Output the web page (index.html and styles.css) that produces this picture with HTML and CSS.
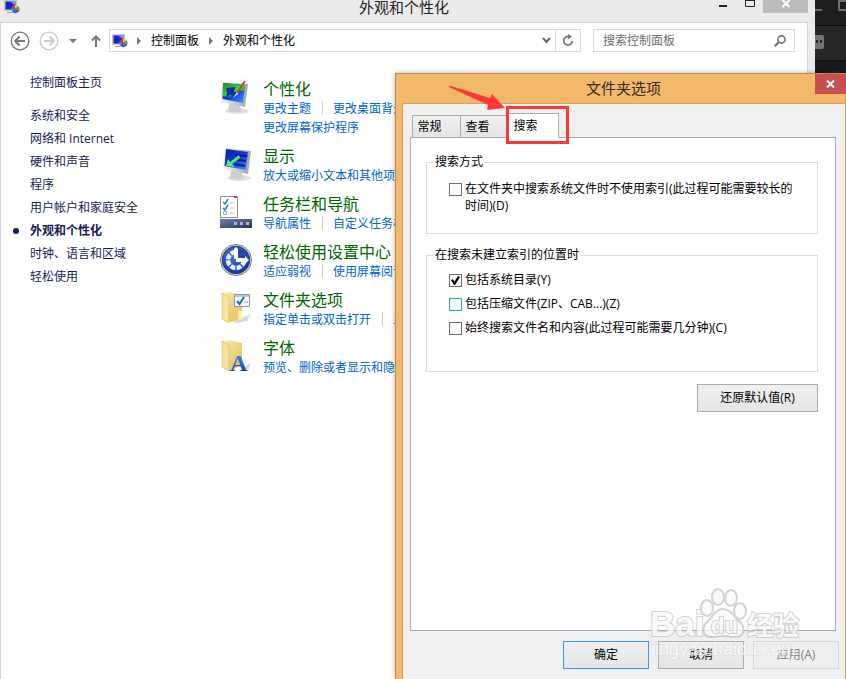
FILE: index.html
```html
<!DOCTYPE html>
<html lang="zh-CN">
<head>
<meta charset="utf-8">
<title>外观和个性化</title>
<link rel="stylesheet" href="styles.css">
</head>
<body>
<svg width="0" height="0" class="defs" aria-hidden="true">
  <defs>
    <linearGradient id="screen" x1="0" y1="0" x2="1" y2="1"><stop offset="0" stop-color="#0a1fa0"/><stop offset=".5" stop-color="#1238e0"/><stop offset="1" stop-color="#3f9bf5"/></linearGradient>
    <linearGradient id="green" x1="0" y1="0" x2="1" y2="1"><stop offset="0" stop-color="#1c8f1c"/><stop offset=".55" stop-color="#35d535"/><stop offset="1" stop-color="#1f9a2a"/></linearGradient>
    <linearGradient id="frame" x1="0" y1="0" x2="1" y2="0"><stop offset="0" stop-color="#f2f2f2"/><stop offset="1" stop-color="#a4a4a4"/></linearGradient>
    <linearGradient id="folder" x1="0" y1="0" x2="1" y2="1"><stop offset="0" stop-color="#fbefb4"/><stop offset="1" stop-color="#dfb850"/></linearGradient>
    <linearGradient id="bar" x1="0" y1="0" x2="1" y2="1"><stop offset="0" stop-color="#6b84ad"/><stop offset="1" stop-color="#27344f"/></linearGradient>
    <radialGradient id="ease" cx=".4" cy=".3" r=".8"><stop offset="0" stop-color="#4a74dc"/><stop offset="1" stop-color="#142c8c"/></radialGradient>
    <linearGradient id="letter" x1="0" y1="0" x2="0" y2="1"><stop offset="0" stop-color="#4b9bf0"/><stop offset="1" stop-color="#0b2fae"/></linearGradient>
    <symbol id="cp" viewBox="0 0 16 16">
      <path d="M0 1h13v11H0z" fill="#c9c8bd"/><path d="M1.500 2.500h10v8h-10z" fill="#1128d0"/><path d="M6 2.500h5.500v4z" fill="#7f9cf5"/>
      <path d="M3 13h6v1H3z" fill="#a5a5a5"/>
      <path d="M11 10V6a4 4 0 0 0-3.800 3z" fill="#e52a24"/><path d="M11 10V6a4 4 0 0 1 3 1z" fill="#f5c518"/><path d="M11 10l3-3a4 4 0 0 1 1.500 4z" fill="#35b535"/><path d="M11 10l4.500 1a4 4 0 0 1-3 3z" fill="#9431c8"/><path d="M11 10l1.500 4a4 4 0 0 1-4.500-2z" fill="#2456e5"/><path d="M11 10l-3 2a4 4 0 0 1-.8-3z" fill="#18a7d8"/>
    </symbol>
  </defs>
</svg>

<div class="desktop">
  <div class="backdrop" aria-hidden="true">
    <svg width="31" height="73" viewBox="0 0 31 73">
      <rect width="31" height="73" fill="#191919"/><rect width="31" height="25" fill="#1e1e1e"/><rect y="26" width="31" height="34" fill="#262626"/>
      <path d="M0 25.500h31M0 61h31" stroke="#0d0d0d"/>
      <path d="M0 9h7v2H0z" fill="#6f6f6f"/><path d="M24 0v10h7M24 1h7" fill="none" stroke="#6f6f6f" stroke-width="2"/>
      <rect x="-6" y="35" width="15" height="14" rx="2" fill="#747474"/><path d="M1 40h2v3H1zM5 40h2v3H5z" fill="#222"/>
      <path d="M12 72h16" stroke="#333"/>
    </svg>
  </div>

  <section class="explorer">
    <header class="titlebar">
      <svg class="app-icon" width="16" height="15" viewBox="0 1 16 15"><use href="#cp" width="16" height="16"/></svg>
      <h1>外观和个性化</h1>
      <div class="captions">
        <button aria-label="最小化"><svg width="30" height="13"><path d="M16 5h8v2h-8z" fill="#222"/></svg></button>
        <button aria-label="最大化"><svg width="30" height="13"><path d="M12.500-1.500h9v8h-9z" fill="none" stroke="#222"/><path d="M12 0h10v1H12z" fill="#222"/></svg></button>
        <button class="close" aria-label="关闭"><svg width="45" height="13"><path d="M19.500 0l7 7M26.500 0l-7 7" stroke="#fff" stroke-width="2"/></svg></button>
      </div>
    </header>
    <div class="client">
      <nav class="toolbar">
        <button aria-label="后退"><svg width="20" height="20" viewBox="0 0 20 20" fill="none" stroke="#777"><circle cx="10" cy="10" r="8.800" stroke-width="1.300"/><path d="M5.500 10H15M9.500 5.500L5.200 10l4.300 4.500" stroke-width="2"/></svg></button>
        <button aria-label="前进"><svg width="20" height="20" viewBox="0 0 20 20" fill="none" stroke="#ccc"><circle cx="10" cy="10" r="8.800" stroke-width="1.300"/><path d="M14.500 10H5M10.500 5.500l4.300 4.500-4.300 4.500" stroke-width="2"/></svg></button>
        <button aria-label="最近位置"><svg width="8" height="8"><path d="M0 2h8L4 6z" fill="#777"/></svg></button>
        <button aria-label="上移"><svg width="10" height="12" viewBox="0 0 10 12" fill="none" stroke="#777" stroke-width="2"><path d="M5 12V2M1 5.500l4-4 4 4"/></svg></button>
        <div class="address">
          <svg width="16" height="16"><use href="#cp"/></svg>
          <svg class="sep" width="5" height="8"><path d="M0 0l4 4-4 4z" fill="#777"/></svg>
          <a href="#">控制面板</a>
          <svg class="sep" width="5" height="8"><path d="M0 0l4 4-4 4z" fill="#777"/></svg>
          <a href="#">外观和个性化</a>
          <button class="drop" aria-label="历史记录"><svg width="9" height="7"><path d="M1 1l3.500 4L8 1" fill="none" stroke="#666" stroke-width="2"/></svg></button>
          <button class="refresh" aria-label="刷新"><svg width="12" height="13" viewBox="0 0 12 13"><path d="M6.500 2.500a4.300 4.300 0 1 0 3.800 4.300" fill="none" stroke="#777" stroke-width="1.700"/><path d="M6 0v5.500l4-3z" fill="#777"/></svg></button>
        </div>
        <label class="search">
          <input type="text" placeholder="搜索控制面板" aria-label="搜索控制面板">
          <svg width="12" height="12" fill="none" stroke="#777"><circle cx="7.500" cy="4.500" r="3.600" stroke-width="1.600"/><path d="M5 7l-4.300 4.300" stroke-width="2"/></svg>
        </label>
      </nav>
      <div class="body">
        <ul class="sidebar">
          <li class="home"><a href="#">控制面板主页</a></li>
          <li><a href="#">系统和安全</a></li>
          <li><a href="#">网络和 Internet</a></li>
          <li><a href="#">硬件和声音</a></li>
          <li><a href="#">程序</a></li>
          <li><a href="#">用户帐户和家庭安全</a></li>
          <li class="current"><a href="#">外观和个性化</a></li>
          <li><a href="#">时钟、语言和区域</a></li>
          <li><a href="#">轻松使用</a></li>
        </ul>
        <main class="categories">
          <article>
            <svg width="32" height="34" viewBox="0 0 32 34"><ellipse cx="17" cy="31" rx="12" ry="3" fill="#e2e2e2"/><path d="M9 24h10l3 7q-7 3-14 0z" fill="#cfcfcf"/><path d="M2 2l26 2-3 23L1 22z" fill="url(#frame)"/><path d="M3 3l22 2-2 18L2.500 19z" fill="url(#screen)"/><path d="M3 3l22 2-1 6q-7-2-10 4-5 3-11 1z" fill="url(#green)"/><path d="M6 8l9-1-1 5h4l-3 5-5-2-4 3 1-5z" fill="#102f9f"/><path d="M25 1L17 13" stroke="#e43a2d" stroke-width="2"/><path d="M17 12l-4 6 5-4z" fill="#ddd"/></svg>
            <div><h2><a href="#">个性化</a></h2><p><a href="#">更改主题</a><a href="#">更改桌面背景</a></p><p><a href="#">更改屏幕保护程序</a></p></div>
          </article>
          <article>
            <svg width="32" height="34" viewBox="0 0 32 34"><ellipse cx="19" cy="31" rx="12" ry="3" fill="#e2e2e2"/><path d="M11 24h10l3 7q-7 3-14 0z" fill="#cfcfcf"/><path d="M5 1l26 3-3 23L3 22z" fill="url(#frame)"/><path d="M6 2l22 3-2 18L4.500 19z" fill="url(#screen)"/><path d="M15 8l12 1M13 12l13 2M14 17l11 2" stroke="#07178b" stroke-width="2"/><path d="M19 8l-9 7-2-3-2 7 9 1-3-3 8-6z" fill="#4cf06b"/></svg>
            <div><h2><a href="#">显示</a></h2><p><a href="#">放大或缩小文本和其他项目</a></p></div>
          </article>
          <article>
            <svg width="32" height="34" viewBox="0 0 32 34"><path d="M.5 1.500h17v21H.5z" fill="#fff" stroke="#8c8c8c"/><path d="M14 1h3v2h-3z" fill="#d44"/><path d="M3 7l2 2 3-5M3 13l2 2 3-5" fill="none" stroke="#2288cc" stroke-width="1.500"/><path d="M3.500 16.500h3v3h-3z" fill="none" stroke="#aaa"/><path d="M10 8h4M10 13h4M10 18h4" stroke="#bbb"/><path d="M0 24h32v9H0z" fill="url(#bar)"/><path d="M14 27h3v3h-3zM20 27h3v3h-3zM26 27h3v3h-3z" fill="#a9b6cf"/></svg>
            <div><h2><a href="#">任务栏和导航</a></h2><p><a href="#">导航属性</a><a href="#">自定义任务栏</a></p></div>
          </article>
          <article>
            <svg width="32" height="34" viewBox="0 0 32 34"><circle cx="16" cy="17" r="15.500" fill="#eee" stroke="#777"/><circle cx="16" cy="17" r="13.800" fill="url(#ease)" stroke="#203a8c"/><circle cx="16" cy="17" r="8" fill="none" stroke="#e7edfb" stroke-width="4.500" stroke-dasharray="5 1.300" stroke-dashoffset="12"/><path d="M17 5l10 3-1 8-9 0z" fill="#2445aa"/><path d="M14 6l2-2 2 2v10h-4zM16 15h9v-2l4 4-4 4v-2h-9z" fill="#fff"/></svg>
            <div><h2><a href="#">轻松使用设置中心</a></h2><p><a href="#">适应弱视</a><a href="#">使用屏幕阅读</a></p></div>
          </article>
          <article>
            <svg width="32" height="34" viewBox="0 0 32 34"><path d="M13 31l18-8-4 7-10 2z" fill="#d8d8d8"/><path d="M2 2l8-1 12 3v22l-11 5-7-2z" fill="url(#folder)"/><path d="M2 2l7 4v26l-7-4z" fill="#f7e39b" stroke="#d9b75c" stroke-width=".6"/><path d="M13 20l9-2v9l-9 4z" fill="#edcd6e"/><path d="M18 20h4v8l-4 1z" fill="#fff1ab"/><path d="M14.500 3.500h15v12h-15z" fill="#f7fbff" stroke="#8b98a8"/><path d="M15 4h14v2H15z" fill="#b9c6d6"/><path d="M17 10l2.500 3L24 6" fill="none" stroke="#1673c4" stroke-width="2"/><path d="M24 11h4" stroke="#99a"/></svg>
            <div><h2><a href="#">文件夹选项</a></h2><p><a href="#">指定单击或双击打开</a><a href="#">显示</a></p></div>
          </article>
          <article>
            <svg width="32" height="34" viewBox="0 0 32 34"><path d="M22 31l9-8-3 9z" fill="#d8d8d8"/><path d="M2 2l8-1 12 3v22l-12 6-7-3z" fill="url(#folder)"/><path d="M2 2l7 4v26l-7-4z" fill="#f7e39b" stroke="#d9b75c" stroke-width=".6"/><text x="10" y="32" class="font-letter" fill="url(#letter)">A</text></svg>
            <div><h2><a href="#">字体</a></h2><p><a href="#">预览、删除或者显示和隐藏</a></p></div>
          </article>
        </main>
      </div>
    </div>
  </section>

  <section class="dialog" role="dialog" aria-labelledby="dialog-title">
    <header>
      <h2 id="dialog-title">文件夹选项</h2>
      <button class="dialog-close" aria-label="关闭"><svg width="9" height="8"><path d="M1 .5l7 7M8 .5l-7 7" stroke="#fff" stroke-width="2"/></svg></button>
    </header>
    <form class="sheet">
      <div class="tabs" role="tablist">
        <button type="button" role="tab">常规</button>
        <button type="button" role="tab">查看</button>
        <button type="button" role="tab" aria-selected="true">搜索</button>
        <span class="highlight"></span>
        <svg class="arrow" width="60" height="28" viewBox="0 0 60 28"><path d="M1 1h2l39 12 2-4 13 14-18 2 1-5L1 2z" fill="#fc3838"/></svg>
      </div>
      <div class="panel" role="tabpanel">
        <fieldset class="how">
          <legend>搜索方式</legend>
          <label><input type="checkbox"><span>在文件夹中搜索系统文件时不使用索引(此过程可能需要较长的时间)(D)</span></label>
        </fieldset>
        <fieldset class="where">
          <legend>在搜索未建立索引的位置时</legend>
          <label><input type="checkbox" checked><span>包括系统目录(Y)</span></label>
          <label><input type="checkbox" class="hot"><span>包括压缩文件(ZIP、CAB...)(Z)</span></label>
          <label><input type="checkbox"><span>始终搜索文件名和内容(此过程可能需要几分钟)(C)</span></label>
        </fieldset>
        <button type="button" class="push restore">还原默认值(R)</button>
      </div>
      <footer>
        <button type="button" class="push default">确定</button>
        <button type="button" class="push">取消</button>
        <button type="button" class="push" disabled>应用(A)</button>
      </footer>
    </form>
    <svg class="watermark" width="152" height="76" viewBox="0 0 152 76" aria-hidden="true">
      <g fill="#fafafa" stroke="#c4c4c4" stroke-width="2">
        <text x="1" y="50" class="wm-brand">Bai</text>
        <ellipse cx="58" cy="22" rx="6" ry="8"/><ellipse cx="69" cy="11" rx="6" ry="8"/><ellipse cx="82" cy="12" rx="6" ry="8"/><ellipse cx="91" cy="25" rx="6" ry="8"/>
        <path d="M74 23c-8 0-10 8-15 12-7 6-6 16 3 16 5 0 8-1 12-1s7 1 12 1c10 0 11-10 4-16-5-4-8-12-16-12z"/>
        <text x="62" y="47" class="wm-du">du</text>
        <text x="98" y="49" class="wm-cn">经验</text>
      </g>
      <text x="2" y="69" class="wm-url">jingyan.baidu.com</text>
    </svg>
  </section>
</div>
</body>
</html>
```
FILE: styles.css
```css
* { box-sizing: border-box; }

body {
  margin: 0;
  font: 12px/16px "Open Sans", "Noto Sans CJK SC", sans-serif;
  color: #000;
}

button {
  padding: 0;
  border: 0;
  background: none;
  font: inherit;
  color: inherit;
}

a { color: inherit; text-decoration: none; }
h1, h2, p, ul { margin: 0; padding: 0; font-weight: normal; }
svg { display: block; flex: none; }
.defs { position: absolute; }

.desktop {
  position: relative;
  min-height: 100vh;
  overflow: hidden;
  background: #191919;
}

.backdrop { position: absolute; top: 0; right: 0; }

/* Explorer window */
.explorer {
  display: flex;
  flex-direction: column;
  min-height: 100vh;
  margin-right: 31px;
  padding-right: 7px;
  background: #ebebeb;
}

.titlebar {
  display: grid;
  grid-template-columns: 1fr auto 1fr;
  height: 22px;
  margin-right: -7px;
  padding-right: 7px;
}

.app-icon { margin-left: 4px; }
.titlebar h1 { font-size: 15px; line-height: 15px; color: #222; }
.captions { display: flex; justify-content: flex-end; align-items: flex-start; }
.captions .close { background: #bcbcbc; }

.client {
  flex: 1;
  border: 1px solid #d5d5d5;
  border-bottom: 0;
  background: #fff;
}

.toolbar {
  display: flex;
  align-items: center;
  padding: 6px 12px 0 9px;
}

.toolbar > button:nth-child(2) { margin-left: 9px; }
.toolbar > button:nth-child(3) { margin-left: 10px; }
.toolbar > button:nth-child(4) { margin-left: 14px; }

.address, .search {
  display: flex;
  align-items: center;
  height: 23px;
  border: 1px solid #d9d9d9;
}

.address { flex: 1; margin: 0 12px 0 8px; padding-left: 2px; }
.address .sep { margin: 0 9px; }
.address a + .sep { margin-left: 10px; }
.address .drop { margin-left: auto; padding: 0 4px; }
.address .refresh { height: 100%; padding: 0 6px; border-left: 1px solid #d9d9d9; }

.search { width: 202px; padding: 0 8px 0 9px; }
.search input {
  flex: 1;
  min-width: 0;
  padding: 0;
  border: 0;
  outline: 0;
  background: none;
  font: inherit;
}
.search input::placeholder { color: #6d6d6d; opacity: 1; }

.body { display: flex; padding-top: 19px; white-space: nowrap; }

.sidebar {
  width: 219px;
  padding-left: 29px;
  list-style: none;
  line-height: 23px;
  color: #151c55;
}
.sidebar .home { margin-bottom: 10px; }
.sidebar .current { display: flex; align-items: center; margin-left: -17px; font-weight: bold; }
.sidebar .current::before {
  width: 6px;
  height: 6px;
  margin-right: 11px;
  border-radius: 50%;
  background: #151c55;
  content: "";
}

.categories { display: flex; flex-direction: column; gap: 10px; padding-top: 9px; }
.categories article { display: flex; gap: 11px; }
.categories article > svg { margin-bottom: -5px; }
.categories h2 { font-size: 16px; line-height: 19px; color: #006600; }
.categories p { display: flex; line-height: 19px; color: #0066cc; }
.categories p a + a { position: relative; margin-left: 22px; }
.categories p a + a::before {
  position: absolute;
  top: 2px;
  left: -11px;
  height: 14px;
  border-left: 1px solid #ccc;
  content: "";
}
.font-letter { font: bold 24px "Liberation Serif", serif; }

/* Folder options dialog */
.dialog {
  position: absolute;
  top: 73px;
  right: 0;
  bottom: 0;
  left: 395px;
  display: flex;
  flex-direction: column;
  border: 1px solid #b98d4f;
  border-right-color: #d9a34f;
  border-bottom: 0;
  background: #f2b96b;
  box-shadow: 0 0 5px rgba(0, 0, 0, .3);
}

.dialog header {
  display: grid;
  grid-template-columns: 1fr;
  height: 29px;
}
.dialog header h2 {
  grid-area: 1 / 1;
  padding-left: 6px;
  font-size: 15px;
  line-height: 28px;
  text-align: center;
  color: #332a1c;
}
.dialog-close {
  grid-area: 1 / 1;
  display: grid;
  place-items: center;
  justify-self: end;
  width: 31px;
  height: 20px;
  margin-right: -1px;
  background: #c75050;
}

.sheet {
  flex: 1;
  display: flex;
  flex-direction: column;
  margin-left: 6px;
  padding: 9px 9px 10px 7px;
  border-top: 1px solid #d9a057;
  border-left: 1px solid #d9a057;
  background: #f0f0f0;
}

.tabs { position: relative; z-index: 1; display: flex; align-items: flex-end; height: 25px; margin-bottom: -1px; padding-left: 2px; }
.tabs button {
  width: 49px;
  height: 23px;
  margin-right: -1px;
  padding: 0 14px 0 0;
  border: 1px solid #acacac;
  background: linear-gradient(#f1f1f1, #e4e4e4);
}
.tabs button[aria-selected="true"] {
  width: 51px;
  height: 25px;
  padding-right: 16px;
  border-bottom: 0;
  background: #fff;
}
.highlight {
  position: absolute;
  top: -7px;
  left: 96px;
  width: 63px;
  height: 38px;
  border: 3px solid #fc3838;
}
.arrow { position: absolute; top: -28px; left: 38px; }

.panel {
  flex: 1;
  display: flex;
  flex-direction: column;
  padding: 16px 17px 0 15px;
  border: 1px solid #acacac;
  background: #fff;
}

fieldset {
  min-width: 0;
  margin: 0;
  padding: 8px 16px 0 22px;
  border: 1px solid #dcdcdc;
}
legend { margin-left: -16px; padding: 0 2px; }
fieldset label { display: flex; gap: 3px; line-height: 17px; }
.how { height: 80px; padding-top: 10px; }
.where { height: 125px; margin-top: 13px; }
.where label { margin-bottom: 7px; }

input[type="checkbox"] {
  flex: none;
  width: 13px;
  height: 13px;
  margin: 3px 0 0;
  border: 1px solid #707070;
  background: #fff;
  appearance: none;
}
input[type="checkbox"].hot { border-color: #3399ff; background: #f3f9ff; }
input[type="checkbox"]:checked::before {
  display: block;
  width: 9px;
  height: 9px;
  margin: 1px;
  background: #000;
  clip-path: polygon(0 45%, 20% 35%, 38% 60%, 78% 0, 100% 12%, 45% 100%, 32% 100%);
  content: "";
}

.push {
  height: 28px;
  border: 1px solid #acacac;
  background: linear-gradient(#f0f0f0, #e5e5e5);
}
.restore { align-self: flex-end; width: 121px; margin-top: 12px; }

footer { display: flex; justify-content: flex-end; gap: 9px; margin: 10px -3px 0 0; }
footer .push { width: 86px; }
.push.default { border-color: #3399ff; }
.push:disabled { border-color: #d9d9d9; background: #efefef; color: #838383; }

.watermark { position: absolute; right: 44px; bottom: 17px; opacity: .75; pointer-events: none; }
.watermark text { paint-order: stroke; }
.wm-brand { font: bold 35px "Liberation Sans", sans-serif; }
.wm-du { font: bold 22px "Liberation Sans", sans-serif; }
.wm-cn { font: bold 26px "Noto Sans CJK SC", sans-serif; }
.wm-url { font: 18px "Liberation Sans", sans-serif; fill: #fff; stroke: #d0d0d0; stroke-width: 1px; }
```
